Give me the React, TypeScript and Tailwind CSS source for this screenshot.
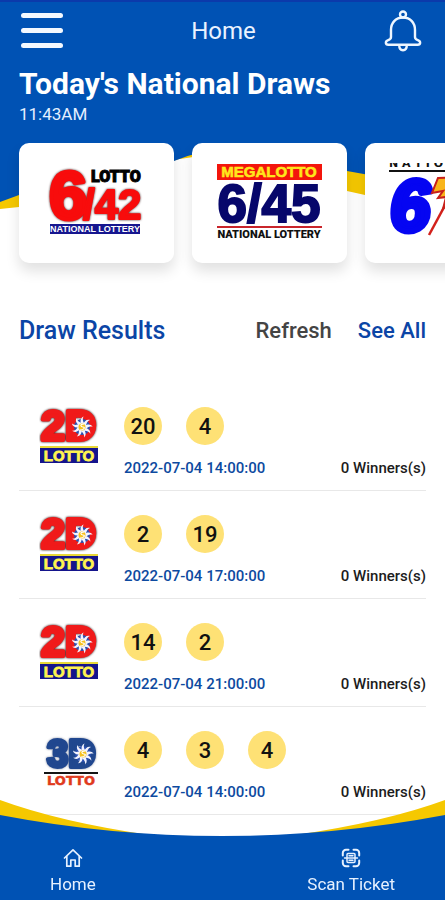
import type { ReactNode } from 'react';

type LogoKind = '2d' | '3d';

interface DrawResult {
  id: number;
  logo: LogoKind;
  numbers: number[];
  drawnAt: string;
  winners: number;
}

const results: DrawResult[] = [
  { id: 1, logo: '2d', numbers: [20, 4], drawnAt: '2022-07-04 14:00:00', winners: 0 },
  { id: 2, logo: '2d', numbers: [2, 19], drawnAt: '2022-07-04 17:00:00', winners: 0 },
  { id: 3, logo: '2d', numbers: [14, 2], drawnAt: '2022-07-04 21:00:00', winners: 0 },
  { id: 4, logo: '3d', numbers: [4, 3, 4], drawnAt: '2022-07-04 14:00:00', winners: 0 },
];

const ROBOTO = '"Roboto", sans-serif';
const SANS = '"Liberation Sans", sans-serif';
const WIDE = '"DejaVu Sans", sans-serif';

function MenuIcon() {
  return (
    <svg width="42" height="36" viewBox="0 0 42 36" fill="#f4f9ff" aria-hidden="true">
      <rect y="0" width="42" height="5" rx="2.5" />
      <rect y="15" width="42" height="5" rx="2.5" />
      <rect y="30" width="42" height="5" rx="2.5" />
    </svg>
  );
}

function BellIcon() {
  return (
    <svg width="38" height="42" viewBox="0 0 38 42" fill="none" stroke="#eef6ff" strokeWidth="2.4" strokeLinejoin="round" aria-hidden="true">
      <circle cx="19" cy="4.5" r="3" />
      <path d="M19 7.500c-7.500 0-12 5.500-12 12.500v7c0 1.800-1.200 2.600-2.800 3.100C.8 31.200 1.300 34.800 4.300 34.800h29.400c3 0 3.500-3.600.1-4.700-1.600-.5-2.800-1.300-2.800-3.100v-7c0-7-4.500-12.500-12-12.500z" />
      <path d="M15.200 35c0 3 1.500 5.200 3.800 5.200s3.800-2.200 3.800-5.200" />
    </svg>
  );
}

function HomeIcon() {
  return (
    <svg width="20" height="20" viewBox="0 0 20 20" fill="none" stroke="#e6f1ff" strokeWidth="1.7" strokeLinejoin="round" strokeLinecap="round" aria-hidden="true">
      <path d="M1.500 10 10 1.800 18.500 10" />
      <path d="M3.800 8.500v9.700h4v-6.200h4.400v6.200h4V8.500" />
    </svg>
  );
}

function ScanIcon() {
  return (
    <svg width="20" height="20" viewBox="0 0 20 20" fill="none" stroke="#e6f1ff" strokeWidth="2" strokeLinecap="round" aria-hidden="true">
      <path d="M7.500 1.800H5A3.200 3.200 0 0 0 1.800 5v2.500M12.500 1.800H15A3.200 3.200 0 0 1 18.200 5v2.500M7.500 18.200H5A3.200 3.200 0 0 1 1.800 15v-2.500M12.500 18.200H15a3.200 3.200 0 0 0 3.200-3.200v-2.500" />
      <rect x="6" y="5.500" width="8" height="9" rx="1" strokeWidth="1.500" />
      <path d="M3.500 10h13M8 7.800h4M8 12.200h4" strokeWidth="1.400" />
    </svg>
  );
}

function Lotto642() {
  return (
    <svg width="155" height="120" viewBox="0 0 155 120" role="img" aria-label="Lotto 6/42">
      <g fontFamily={SANS} fontWeight="700" fill="#f80c0c" stroke="#f80c0c" strokeLinejoin="round" className="[filter:drop-shadow(0_0_1px_#4a2a2a)]">
        <text x="30" y="76" fontSize="69" strokeWidth="4">6</text>
        <text x="64" y="76" fontSize="42" strokeWidth="2">/42</text>
      </g>
      <text x="72" y="39" fontFamily={ROBOTO} fontWeight="900" fontSize="16" fill="#000" stroke="#000" strokeWidth="1">LOTTO</text>
      <rect x="31" y="81" width="90" height="10" fill="#16168f" />
      <text x="76" y="89" textAnchor="middle" fontFamily={SANS} fontWeight="700" fontSize="9" fill="#fff">NATIONAL LOTTERY</text>
    </svg>
  );
}

function Lotto645() {
  return (
    <svg width="155" height="120" viewBox="0 0 155 120" role="img" aria-label="Megalotto 6/45">
      <rect x="25" y="21" width="105" height="16" fill="#f3150c" />
      <text x="77" y="34" textAnchor="middle" fontFamily={SANS} fontWeight="700" fontSize="15" fill="#ffe81c" stroke="#ffe81c" strokeWidth="0.6">MEGALOTTO</text>
      <text x="77" y="79" textAnchor="middle" fontFamily={SANS} fontWeight="700" fontSize="53" fill="#07076b" stroke="#07076b" strokeWidth="2">6/45</text>
      <rect x="25" y="83" width="105" height="2" fill="#c9252b" />
      <text x="77" y="95" textAnchor="middle" fontFamily={ROBOTO} fontWeight="900" fontSize="11" fill="#111">NATIONAL LOTTERY</text>
    </svg>
  );
}

function Lotto649() {
  return (
    <svg width="155" height="120" viewBox="0 0 155 120" role="img" aria-label="Superlotto 6/49">
      <clipPath id="strip">
        <rect x="20" y="20" width="120" height="5" />
      </clipPath>
      <g clipPath="url(#strip)">
        <text x="24" y="24" fontFamily={WIDE} fontWeight="700" fontSize="11" fill="#111">N A T I O N A L</text>
      </g>
      <rect x="24" y="27" width="107" height="2" fill="#111" />
      <text x="25" y="88" fontFamily={SANS} fontWeight="700" fontStyle="italic" fontSize="72" fill="#0505f2" stroke="#0505f2" strokeWidth="6" strokeLinejoin="round">6</text>
      <path d="M64 92 84 55" stroke="#d3211b" strokeWidth="2.500" />
      <path d="M73 35 96 34 90 47h6L78 66l3-12-8 1 5-7-11 2z" fill="#f9b51b" stroke="#c8201a" strokeWidth="2" />
      <text x="88" y="89" fontFamily={SANS} fontWeight="700" fontSize="44" fill="#d3211b">49</text>
    </svg>
  );
}

function Sun({ cx, cy }: { cx: number; cy: number }) {
  const rays = [0, 40, 80, 120, 160, 200, 240, 280, 320];
  return (
    <g transform={`translate(${cx} ${cy})`}>
      <circle r="8" fill="#2b4fae" />
      {rays.map((angle) => (
        <path key={angle} d="M1-2C2-6 5-8 8-7 5-6 4-3 4 0z" fill="#f4f4ff" transform={`rotate(${angle})`} />
      ))}
      <circle r="3.5" fill="#f7c21f" />
      <path d="M2-3c-5 0-3 3-1 3s2 3-3 3" fill="none" stroke="#fff" strokeWidth="1.2" />
    </g>
  );
}

function Logo2D() {
  return (
    <svg width="62" height="58" viewBox="0 0 62 58" role="img" aria-label="2D Lotto">
      <text
        x="2"
        y="33"
        fontFamily={SANS}
        fontWeight="700"
        fontSize="43"
        fill="#f01a1a"
        stroke="#f01a1a"
        strokeWidth="4"
        strokeLinejoin="round"
        className="[filter:drop-shadow(0_0_1px_#200808)]"
      >
        2D
      </text>
      <Sun cx={43} cy={20} />
      <rect x="1" y="39" width="58" height="2" fill="#e8d838" />
      <rect x="1" y="41" width="58" height="15" fill="#14148c" />
      <text x="30" y="54" textAnchor="middle" fontFamily={SANS} fontWeight="700" fontSize="15" fill="#fff450" stroke="#fff450" strokeWidth="0.8">LOTTO</text>
    </svg>
  );
}

function Logo3D() {
  return (
    <svg width="62" height="58" viewBox="0 0 62 58" role="img" aria-label="3D Lotto">
      <text
        x="8"
        y="36"
        fontFamily={SANS}
        fontWeight="700"
        fontSize="38"
        fill="#20478f"
        stroke="#20478f"
        strokeWidth="4"
        strokeLinejoin="round"
        className="[filter:drop-shadow(0_0_1px_#8a93a8)]"
      >
        3D
      </text>
      <Sun cx={44} cy={23} />
      <rect x="5" y="41" width="54" height="2" fill="#151515" />
      <text x="32" y="54" textAnchor="middle" fontFamily={WIDE} fontWeight="700" fontSize="13" fill="#e03a1c" stroke="#e03a1c" strokeWidth="0.5">LOTTO</text>
    </svg>
  );
}

function HeaderBackdrop() {
  return (
    <svg className="absolute inset-x-0 top-0 -z-10 h-[210px] w-full" viewBox="0 0 445 210" preserveAspectRatio="none" aria-hidden="true">
      <path d="M0 0H445V210Q405 203 365 195L347 191 180 159 19 207 0 209z" fill="#f5c800" />
      <path d="M180 159 240 150 347 191V210H19v-3z" fill="#fff" />
      <path d="M0 0H445V194Q405 181 347 171L240 150Q210 146 174 161L19 195 0 202z" fill="#0052b4" />
      <path d="M0 0H445V2H0z" fill="#0b3aab" />
    </svg>
  );
}

function GameCard({ children }: { children: ReactNode }) {
  return (
    <button className="h-[120px] w-[155px] shrink-0 rounded-[10px] bg-white shadow-[0_8px_14px_rgba(0,0,0,0.12)]">
      {children}
    </button>
  );
}

function ResultRow({ result }: { result: DrawResult }) {
  return (
    <li className="flex border-b border-[#e8e8e8] pt-6 pb-3">
      <div className="w-[105px] shrink-0 pl-5">{result.logo === '2d' ? <Logo2D /> : <Logo3D />}</div>
      <div className="min-w-0 flex-1">
        <div className="flex gap-6">
          {result.numbers.map((n, i) => (
            <span key={i} className="flex size-[38px] items-center justify-center rounded-full bg-[#fee175] text-[22px] font-medium text-[#111]">
              {n}
            </span>
          ))}
        </div>
        <div className="mt-[13px] flex items-center justify-between leading-5">
          <time className="text-[15px] font-medium text-[#0d4aa0]">{result.drawnAt}</time>
          <span className="text-[15px] font-medium text-[#1c1c1c]">{result.winners} Winners(s)</span>
        </div>
      </div>
    </li>
  );
}

export default function App() {
  return (
    <div className="relative isolate min-h-screen overflow-x-hidden bg-white pb-20 font-['Roboto',sans-serif]">
      <HeaderBackdrop />

      <header className="flex h-[62px] items-center justify-between pr-[23px] pl-[21px] text-white">
        <button aria-label="Open menu">
          <MenuIcon />
        </button>
        <h1 className="text-2xl text-[#eaf3ff]">Home</h1>
        <button aria-label="Notifications">
          <BellIcon />
        </button>
      </header>

      <section>
        <div className="px-[19px] pt-1 text-white">
          <h2 className="text-[30px] leading-9 font-bold">Today's National Draws</h2>
          <p className="text-[17px] leading-6 text-[#e4efff]">11:43AM</p>
        </div>
        <div className="mt-[17px] flex gap-[18px] overflow-x-auto pr-5 pb-8 pl-[19px] [scrollbar-width:none]">
          <GameCard>
            <Lotto642 />
          </GameCard>
          <GameCard>
            <Lotto645 />
          </GameCard>
          <GameCard>
            <Lotto649 />
          </GameCard>
        </div>
      </section>

      <section className="px-[19px]">
        <div className="flex items-center justify-between pt-5 pb-9 leading-8 font-medium">
          <h2 className="text-[25px] leading-8 text-[#0b45a6]">Draw Results</h2>
          <div className="flex gap-[26px] text-[22px]">
            <button className="text-[#444]">Refresh</button>
            <a href="#results" className="text-[#0b45a6]">
              See All
            </a>
          </div>
        </div>
        <ul id="results">
          {results.map((r) => (
            <ResultRow key={r.id} result={r} />
          ))}
        </ul>
      </section>

      <nav className="fixed inset-x-0 bottom-0">
        <svg className="absolute inset-0 -z-10 h-full w-full" viewBox="0 0 445 100" preserveAspectRatio="none" aria-hidden="true">
          <path d="M0 0Q60 22 150 35L0 40z" fill="#f5c800" />
          <path d="M445 0Q385 22 295 35L445 40z" fill="#f5c800" />
          <path d="M0 15Q110 36 222 36T445 15V100H0z" fill="#0052b4" />
        </svg>
        <div className="flex justify-between px-[50px] pt-12 pb-1 text-[17px] leading-6 text-[#e6f1ff]">
          <a href="#home" className="flex flex-col items-center">
            <HomeIcon />
            <span className="mt-1">Home</span>
          </a>
          <a href="#scan" className="flex flex-col items-center">
            <ScanIcon />
            <span className="mt-1">Scan Ticket</span>
          </a>
        </div>
      </nav>
    </div>
  );
}
